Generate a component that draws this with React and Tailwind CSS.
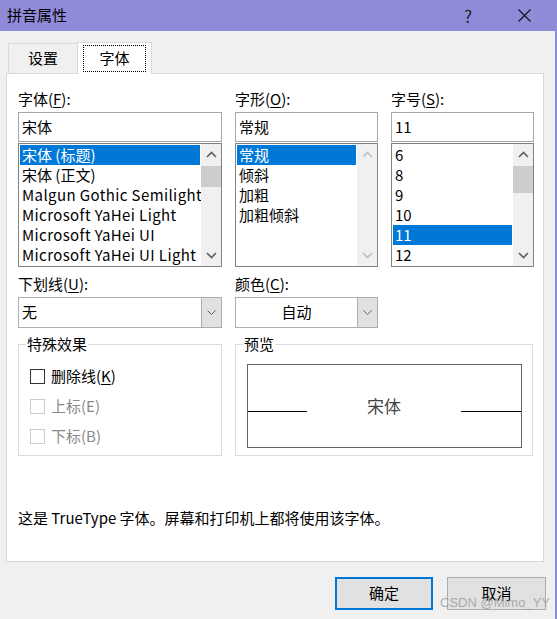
import React from 'react'

const font = { fontFamily: "'Noto Sans CJK SC', 'Noto Sans', sans-serif" }

const Up = ({ color = '#606060' }) => (
    <svg width="11" height="7" viewBox="0 0 11 7">
        <path d="M1 6 L5.5 1.5 L10 6" fill="none" stroke={color} strokeWidth="1.6" />
    </svg>
)

const Down = ({ color = '#606060' }) => (
    <svg width="11" height="7" viewBox="0 0 11 7">
        <path d="M1 1 L5.5 5.5 L10 1" fill="none" stroke={color} strokeWidth="1.6" />
    </svg>
)

const Mn = ({ children }) => <span className="underline underline-offset-2">{children}</span>

const Label = ({ children }) => (
    <div className="h-[20px] leading-[20px] text-[15px] text-black mb-[3px]">{children}</div>
)

const TextBox = ({ value }) => (
    <div className="h-[30px] border border-[#a8a8a8] bg-white flex items-center pl-[3px] text-[15px] text-black">
        {value}
    </div>
)

// list box with a scroll bar on its right
const ListBox = ({ items, selected, thumb, latin }) => (
    <div className="mt-px h-[124px] border border-[#828282] bg-white flex">
        <div className="flex-1 p-px overflow-hidden">
            {items.map((item) => (
                <div
                    key={item}
                    className={`h-[20px] leading-[20px] pl-[2px] text-[15px] whitespace-nowrap ${latin && /^[A-Za-z]/.test(item) ? 'tracking-[0.4px]' : ''} ${item === selected ? 'bg-[#0078d7] text-white' : 'text-black'}`}
                >
                    {item}
                </div>
            ))}
        </div>
        <div className="w-[20px] bg-[#f0f0f0] flex flex-col">
            <div className="h-[21px] flex items-center justify-center">
                <Up color={thumb ? '#606060' : '#c0c0c0'} />
            </div>
            {thumb && <div className={`bg-[#cdcdcd] mt-px ${thumb}`} />}
            <div className="flex-1" />
            <div className="h-[21px] flex items-center justify-center">
                <Down color={thumb ? '#606060' : '#c0c0c0'} />
            </div>
        </div>
    </div>
)

const Combo = ({ value, center }) => (
    <div className="h-[31px] border border-[#adadad] bg-white flex text-[15px] text-black">
        <div className={`flex-1 flex items-center ${center ? 'justify-center' : 'pl-[3px]'}`}>{value}</div>
        <div className="w-[20px] bg-[#e1e1e1] border-l border-[#adadad] flex items-center justify-center">
            <svg width="9" height="5" viewBox="0 0 9 5">
                <path d="M0.5 0.5 L4.5 4.5 L8.5 0.5" fill="none" stroke="#606060" strokeWidth="1" />
            </svg>
        </div>
    </div>
)

const Check = ({ label, disabled }) => (
    <div className="h-[30px] flex items-center pl-[11px]">
        <div className={`w-[15px] h-[15px] ${disabled ? 'border border-[#cccccc]' : 'border-[1.5px] border-[#333333]'}`} />
        <span className={`ml-[6px] text-[15px] ${disabled ? 'text-[#8a8a8a]' : 'text-black'}`}>{label}</span>
    </div>
)

export default function App() {
    return (
        <div className="w-[557px] h-[619px] flex flex-col bg-[#f0f0f0] relative overflow-hidden" style={font}>
            {/* Title bar */}
            <div className="h-[31px] bg-[#8f8bd8] flex items-center shrink-0">
                <span className="ml-[7px] text-[15px] text-black">拼音属性</span>
                <span className="ml-auto mr-[46px] text-[17px] text-[#222] leading-none">?</span>
                <svg width="13" height="13" viewBox="0 0 13 13" className="mr-[26px]">
                    <path d="M0.5 0.5 L12.5 12.5 M12.5 0.5 L0.5 12.5" stroke="#111" strokeWidth="1.1" />
                </svg>
            </div>

            <div className="flex-1 flex flex-col border-r-2 border-[#8f8bd8] pl-[6px] pr-[11px]">
                {/* Tabs */}
                <div className="flex items-end mt-[11px] pl-[2px] h-[31px]">
                    <div className="w-[69px] h-[30px] border-t border-l border-[#d9d9d9] flex items-center justify-center text-[15px] text-black">
                        设置
                    </div>
                    <div className="w-[75px] h-[32px] -mb-px relative z-10 bg-white border-t border-l border-r border-[#d9d9d9] flex items-start justify-center pt-[2px]">
                        <div className="w-[63px] h-[27px] border border-dotted border-black flex items-center justify-center text-[15px] text-black">
                            字体
                        </div>
                    </div>
                </div>

                {/* Panel */}
                <div className="h-[489px] bg-white border border-[#d9d9d9] pl-[11px] pt-[15px]">
                    <div className="flex gap-[13px]">
                        <div className="w-[204px]">
                            <Label>字体(<Mn>F</Mn>):</Label>
                            <div className="mt-px">
                                <TextBox value="宋体" />
                            </div>
                            <ListBox
                                items={['宋体 (标题)', '宋体 (正文)', 'Malgun Gothic Semilight', 'Microsoft YaHei Light', 'Microsoft YaHei UI', 'Microsoft YaHei UI Light']}
                                selected="宋体 (标题)"
                                thumb="h-[21px]"
                                latin
                            />
                        </div>
                        <div className="w-[143px]">
                            <Label>字形(<Mn>O</Mn>):</Label>
                            <div className="mt-px">
                                <TextBox value="常规" />
                            </div>
                            <ListBox items={['常规', '倾斜', '加粗', '加粗倾斜']} selected="常规" />
                        </div>
                        <div className="w-[143px]">
                            <Label>字号(<Mn>S</Mn>):</Label>
                            <div className="mt-px">
                                <TextBox value="11" />
                            </div>
                            <ListBox items={['6', '8', '9', '10', '11', '12']} selected="11" thumb="h-[27px]" />
                        </div>
                    </div>

                    <div className="flex gap-[13px] mt-[7px]">
                        <div className="w-[204px]">
                            <Label>下划线(<Mn>U</Mn>):</Label>
                            <div className="mt-[2px]">
                                <Combo value="无" />
                            </div>
                        </div>
                        <div className="w-[143px]">
                            <Label>颜色(<Mn>C</Mn>):</Label>
                            <div className="mt-[2px]">
                                <Combo value="自动" center />
                            </div>
                        </div>
                    </div>

                    <div className="flex gap-[13px] mt-[6px]">
                        <fieldset className="w-[204px] border border-[#dcdcdc]">
                            <legend className="ml-[7px] px-px h-[20px] leading-[20px] text-[15px] text-black">特殊效果</legend>
                            <div className="pt-[7px] pb-[2px]">
                                <Check label={<>删除线(<Mn>K</Mn>)</>} />
                                <Check label="上标(E)" disabled />
                                <Check label="下标(B)" disabled />
                            </div>
                        </fieldset>
                        <fieldset className="w-[298px] border border-[#dcdcdc]">
                            <legend className="ml-[7px] px-px h-[20px] leading-[20px] text-[15px] text-black">预览</legend>
                            <div className="mx-[10px] ml-[11px] mt-[10px] mb-[7px] h-[84px] border border-[#646464] flex items-center">
                                <div className="w-[59px] h-px bg-black mt-[11px]" />
                                <div className="flex-1 text-center text-[17px] text-[#444]">宋体</div>
                                <div className="w-[60px] h-px bg-black mt-[11px]" />
                            </div>
                        </fieldset>
                    </div>

                    <div className="mt-[52px] h-[20px] leading-[20px] text-[15px] text-black">
                        这是 TrueType 字体。屏幕和打印机上都将使用该字体。
                    </div>
                </div>

                {/* Buttons */}
                <div className="flex justify-end gap-[14px] mt-[15px] -mr-[2px]">
                    <div className="w-[98px] h-[33px] bg-[#e1e1e1] border-2 border-[#0078d7] flex items-center justify-center text-[15px] text-black">
                        确定
                    </div>
                    <div className="w-[99px] h-[33px] bg-[#e1e1e1] border border-[#adadad] flex items-center justify-center text-[15px] text-black">
                        取消
                    </div>
                </div>
            </div>

            {/* watermark */}
            <div
                className="absolute left-[440px] top-[596px] text-[13px] text-[#9a9a9a]/80 leading-none"
                style={{ fontFamily: "'Liberation Sans', Arial, sans-serif" }}
            >
                CSDN @Mimo_YY
            </div>
        </div>
    )
}
